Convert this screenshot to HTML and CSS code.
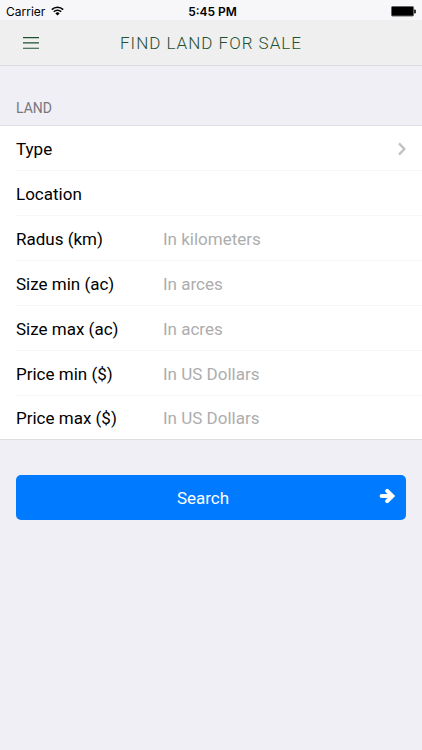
FILE: index.html
```
<!DOCTYPE html>
<html lang="en">
<head>
<meta charset="utf-8">
<meta name="viewport" content="width=device-width, initial-scale=1">
<title>Find Land For Sale</title>
<link rel="stylesheet" href="styles.css">
</head>
<body>
<div class="status">
  <div class="carrier">
    <span>Carrier</span>
    <svg class="wifi" viewBox="0 0 13 10" aria-hidden="true">
      <path d="M.8 3.6a8.2 8.2 0 0 1 11.4 0M2.8 5.8a5.3 5.3 0 0 1 7.4 0" fill="none" stroke="#000" stroke-width="1.6"/>
      <path d="M4.4 7.4a3 3 0 0 1 4.2 0L6.5 9.6z"/>
    </svg>
  </div>
  <div class="clock">5:45 PM</div>
  <svg class="battery" viewBox="0 0 26 11" aria-hidden="true">
    <rect x="1.5" y=".5" width="22" height="9.5" rx="1" stroke="#666"/>
    <path d="M24.2 3.5h.6a1 1 0 0 1 1 1v2a1 1 0 0 1-1 1h-.6z"/>
  </svg>
</div>
<header class="bar">
  <button class="menu" type="button" aria-label="Menu">
    <svg viewBox="0 0 16 12" aria-hidden="true"><path d="M0 .6h16M0 5.9h16M0 11.2h16" stroke="#1f5130" stroke-width="1.1"/></svg>
  </button>
  <h1>FIND LAND FOR SALE</h1>
</header>
<main>
  <form>
    <h2>LAND</h2>
    <div class="list">
      <button class="row" type="button">
        <span class="name">Type</span>
        <svg class="chevron" viewBox="0 0 8 14" aria-hidden="true"><path d="M1 1.4L6.4 7 1 12.6" fill="none" stroke="#c2c2c6" stroke-width="2.4"/></svg>
      </button>
      <div class="row"><label class="name" for="location">Location</label><input id="location" type="text"></div>
      <div class="row"><label class="name" for="radius">Radus (km)</label><input id="radius" type="text" placeholder="In kilometers"></div>
      <div class="row"><label class="name" for="size-min">Size min (ac)</label><input id="size-min" type="text" placeholder="In arces"></div>
      <div class="row"><label class="name" for="size-max">Size max (ac)</label><input id="size-max" type="text" placeholder="In acres"></div>
      <div class="row"><label class="name" for="price-min">Price min ($)</label><input id="price-min" type="text" placeholder="In US Dollars"></div>
      <div class="row"><label class="name" for="price-max">Price max ($)</label><input id="price-max" type="text" placeholder="In US Dollars"></div>
    </div>
    <button class="search" type="submit">
      <span>Search</span>
      <svg viewBox="0 0 16 16" aria-hidden="true"><path d="M2.6 8h10M8.2 2.8L13.4 8l-5.2 5.2" fill="none" stroke="#fff" stroke-width="4" stroke-linecap="round"/></svg>
    </button>
  </form>
</main>
</body>
</html>
```
FILE: styles.css
```
* {
  box-sizing: border-box;
}

body {
  margin: 0;
  min-height: 100vh;
  background: #efeff5;
  color: #000;
  font-family: Roboto, "Liberation Sans", sans-serif;
  font-size: 17px;
}

button,
input {
  border: 0;
  padding: 0;
  background: none;
  color: inherit;
  font: inherit;
}

.status {
  display: grid;
  grid-template-columns: 1fr auto 1fr;
  align-items: center;
  height: 20px;
  padding: 2px 6px 0;
  background: #f7f7f9;
  font-family: Inter, sans-serif;
  font-size: 12px;
}

.carrier {
  display: flex;
  align-items: center;
  gap: 6px;
}

.wifi {
  width: 13px;
  height: 10px;
}

.clock {
  padding-left: 3px;
  font-weight: 600;
}

.battery {
  width: 26px;
  height: 11px;
  justify-self: end;
}

.bar {
  display: grid;
  grid-template-columns: 48px 1fr 48px;
  align-items: center;
  height: 46px;
  border-bottom: 1px solid #dcdce2;
  background: #efefef;
}

.menu {
  display: flex;
  height: 44px;
  align-items: center;
  padding-left: 23px;
}

.menu svg {
  width: 16px;
  height: 12px;
}

h1 {
  margin: 0;
  color: #1f5130;
  font-size: 17px;
  font-weight: 300;
  letter-spacing: 1px;
  text-align: center;
}

h2 {
  margin: 0;
  padding: 34px 16px 10px;
  color: #77777c;
  font-size: 14px;
  font-weight: 400;
  line-height: 16px;
}

.list {
  border-bottom: 1px solid #dedee3;
  background: #fff;
  box-shadow: 0 -1px #dedee3;
}

.row {
  display: flex;
  align-items: center;
  width: 100%;
  height: 45px;
  padding-right: 16px;
  padding-left: 16px;
  background: linear-gradient(#f7f7f8, #f7f7f8) 16px 100% / 100% 1px no-repeat;
  text-align: left;
}

.row:last-child {
  height: 43px;
  background: none;
}

.name {
  flex: 0 0 147px;
}

.row input {
  flex: 1;
  min-width: 0;
  height: 43px;
  outline: 0;
}

.row input::placeholder {
  color: #adadad;
  opacity: 1;
}

.chevron {
  width: 8px;
  height: 14px;
  margin-left: auto;
}

.search {
  display: flex;
  align-items: center;
  width: calc(100% - 32px);
  height: 45px;
  margin: 35px 16px;
  padding: 0 11px;
  border-radius: 5px;
  background: #007aff;
  color: #fff;
}

.search span {
  flex: 1;
}

.search svg {
  width: 16px;
  height: 16px;
  margin-bottom: 4px;
}
```
